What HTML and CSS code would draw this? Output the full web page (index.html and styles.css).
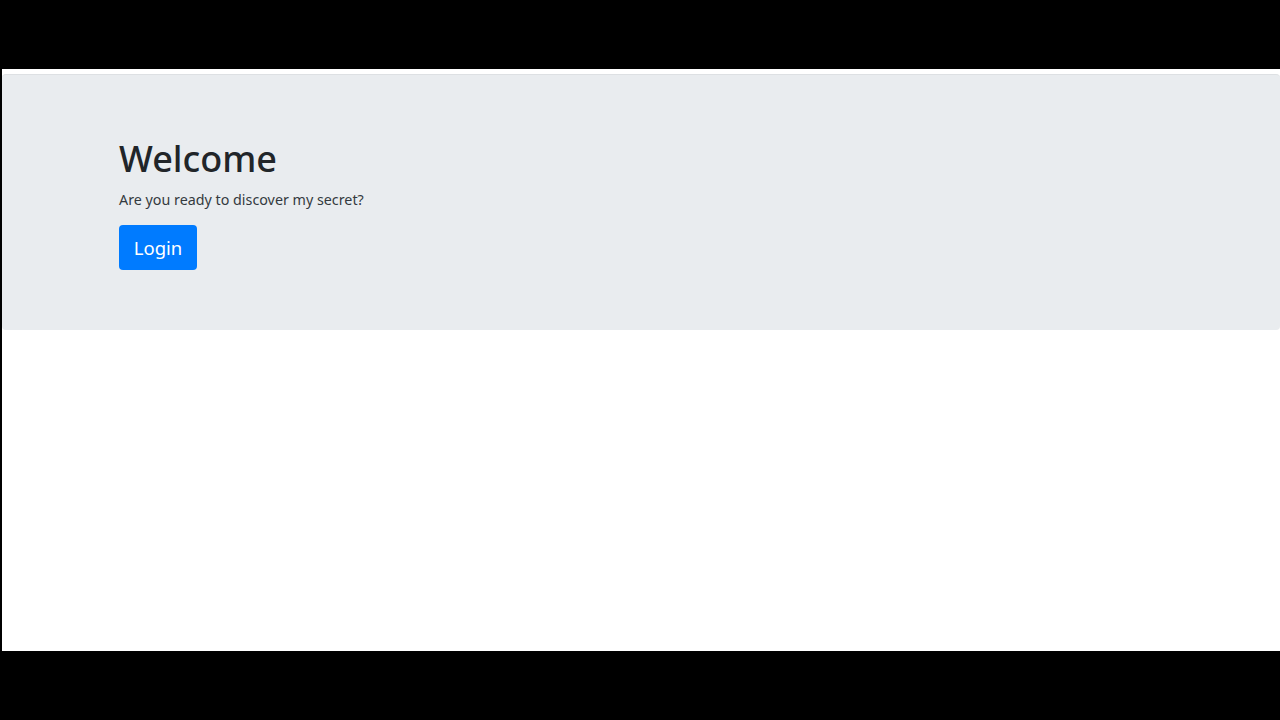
FILE: index.html
```html
<!DOCTYPE html>
<html lang="en">
<head>
<meta charset="utf-8">
<title>Welcome</title>
<link rel="stylesheet" href="styles.css">
</head>
<body>
<div class="screen">
  <div class="jumbotron">
    <div class="container">
      <h1 class="title">Welcome</h1>
      <p class="lead-text">Are you ready to discover my secret?</p>
      <a class="btn-login" href="#">Login</a>
    </div>
  </div>
</div>
</body>
</html>
```
FILE: styles.css
```css
html, body {
  margin: 0;
  padding: 0;
}
body {
  background: #000;
  width: 1280px;
  height: 720px;
  padding-top: 69px;
  box-sizing: border-box;
  font-family: "Noto Sans", "Open Sans", sans-serif;
  overflow: hidden;
}
.screen {
  margin-left: 2px;
  height: 582px;
  background: #fff;
  padding-top: 5px;
  box-sizing: border-box;
}
.jumbotron {
  background: #e9ecef;
  border-top: 1px solid #dde0e3;
  border-radius: 4px;
  height: 256px;
  box-sizing: border-box;
  padding: 61px 117px 0;
}
.container {
  display: flex;
  flex-direction: column;
  align-items: flex-start;
}
.title {
  margin: 0;
  font-size: 36px;
  font-weight: 500;
  line-height: 46px;
  color: #212529;
}
.lead-text {
  margin: 7px 0 0;
  font-size: 14.3px;
  line-height: 22px;
  color: #343a40;
}
.btn-login {
  margin-top: 14px;
  display: inline-block;
  width: 78px;
  height: 45px;
  box-sizing: border-box;
  line-height: 45px;
  text-align: center;
  background: #007bff;
  color: #fff;
  font-size: 18.5px;
  border-radius: 4px;
  text-decoration: none;
}
```
